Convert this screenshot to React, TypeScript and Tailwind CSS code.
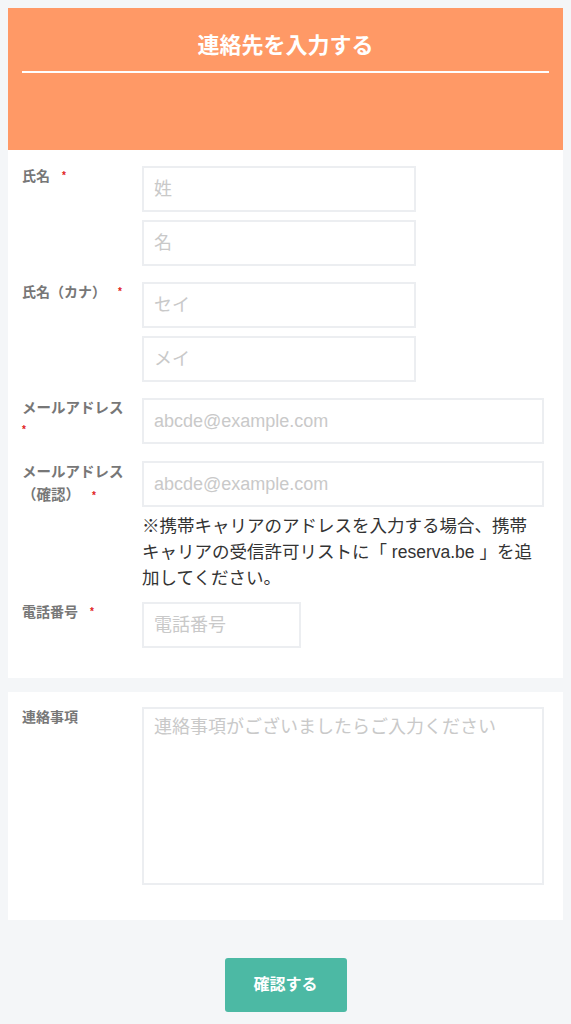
import React from "react";

const font = { fontFamily: '"Liberation Sans", "Noto Sans CJK JP", sans-serif' };

function Req() {
  return <span className="ml-[12px] text-[10px] align-top text-[#e02020]">*</span>;
}

function Field({ placeholder, width }: { placeholder: string; width: string }) {
  return (
    <input
      placeholder={placeholder}
      className={`${width} h-[46px] border-2 border-[#eceef1] bg-white px-[10px] text-[18px] text-[#333] placeholder:text-[#c9c9c9] outline-none`}
    />
  );
}

export default function App() {
  return (
    <div className="min-h-screen bg-[#f4f6f8] pt-2 pb-[13px]" style={font}>
      <div className="mx-2">
        {/* Header */}
        <div className="h-[142px] bg-[#ff9966] px-[14px] pt-[23px]">
          <h1 className="text-center text-[22px] font-bold leading-[30px] text-white">連絡先を入力する</h1>
          <div className="mt-[10px] h-[2px] bg-white" />
        </div>

        {/* Contact card */}
        <div className="bg-white pl-[14px] pr-[19px] pt-4 pb-[30px]">
          <div className="flex">
            <div className="w-[120px] shrink-0 text-[14px] font-bold leading-[20px] text-[#777]">
              氏名<Req />
            </div>
            <div className="flex flex-col gap-2">
              <Field placeholder="姓" width="w-[274px]" />
              <Field placeholder="名" width="w-[274px]" />
            </div>
          </div>

          <div className="mt-4 flex">
            <div className="w-[120px] shrink-0 text-[14px] font-bold leading-[20px] text-[#777]">
              氏名（カナ）<Req />
            </div>
            <div className="flex flex-col gap-2">
              <Field placeholder="セイ" width="w-[274px]" />
              <Field placeholder="メイ" width="w-[274px]" />
            </div>
          </div>

          <div className="mt-4 flex">
            <div className="w-[120px] shrink-0 text-[14.5px] font-bold leading-[21px] text-[#777]">
              メールアドレス
              <br />
              <span className="-ml-[12px]">
                <Req />
              </span>
            </div>
            <Field placeholder="abcde@example.com" width="flex-1 min-w-0" />
          </div>

          <div className="mt-[17px] flex">
            <div className="w-[120px] shrink-0 text-[14.5px] font-bold leading-[23px] text-[#777]">
              メールアドレス
              <br />
              （確認）<Req />
            </div>
            <div className="flex min-w-0 flex-1 flex-col">
              <Field placeholder="abcde@example.com" width="w-full" />
              <p className="mt-[6px] text-[17.5px] leading-[26px] text-[#333]">
                ※携帯キャリアのアドレスを入力する場合、携帯キャリアの受信許可リストに「 reserva.be 」を追加してください。
              </p>
            </div>
          </div>

          <div className="mt-[11px] flex">
            <div className="w-[120px] shrink-0 text-[14px] font-bold leading-[20px] text-[#777]">
              電話番号<Req />
            </div>
            <Field placeholder="電話番号" width="w-[159px]" />
          </div>
        </div>

        {/* Notes card */}
        <div className="mt-[14px] flex bg-white pl-[14px] pr-[19px] pt-[15px] pb-[35px]">
          <div className="w-[120px] shrink-0 text-[14px] font-bold leading-[20px] text-[#777]">連絡事項</div>
          <textarea
            placeholder="連絡事項がございましたらご入力ください"
            className="h-[178px] min-w-0 flex-1 resize-none border-2 border-[#eceef1] px-[10px] py-[3px] text-[18px] leading-[30px] text-[#333] placeholder:text-[#c9c9c9] outline-none"
          />
        </div>

        <div className="mt-[38px] flex justify-center">
          <button className="h-[54px] w-[122px] rounded-[3px] bg-[#4cb9a4] text-[16px] font-bold text-white">
            確認する
          </button>
        </div>
      </div>
    </div>
  );
}
